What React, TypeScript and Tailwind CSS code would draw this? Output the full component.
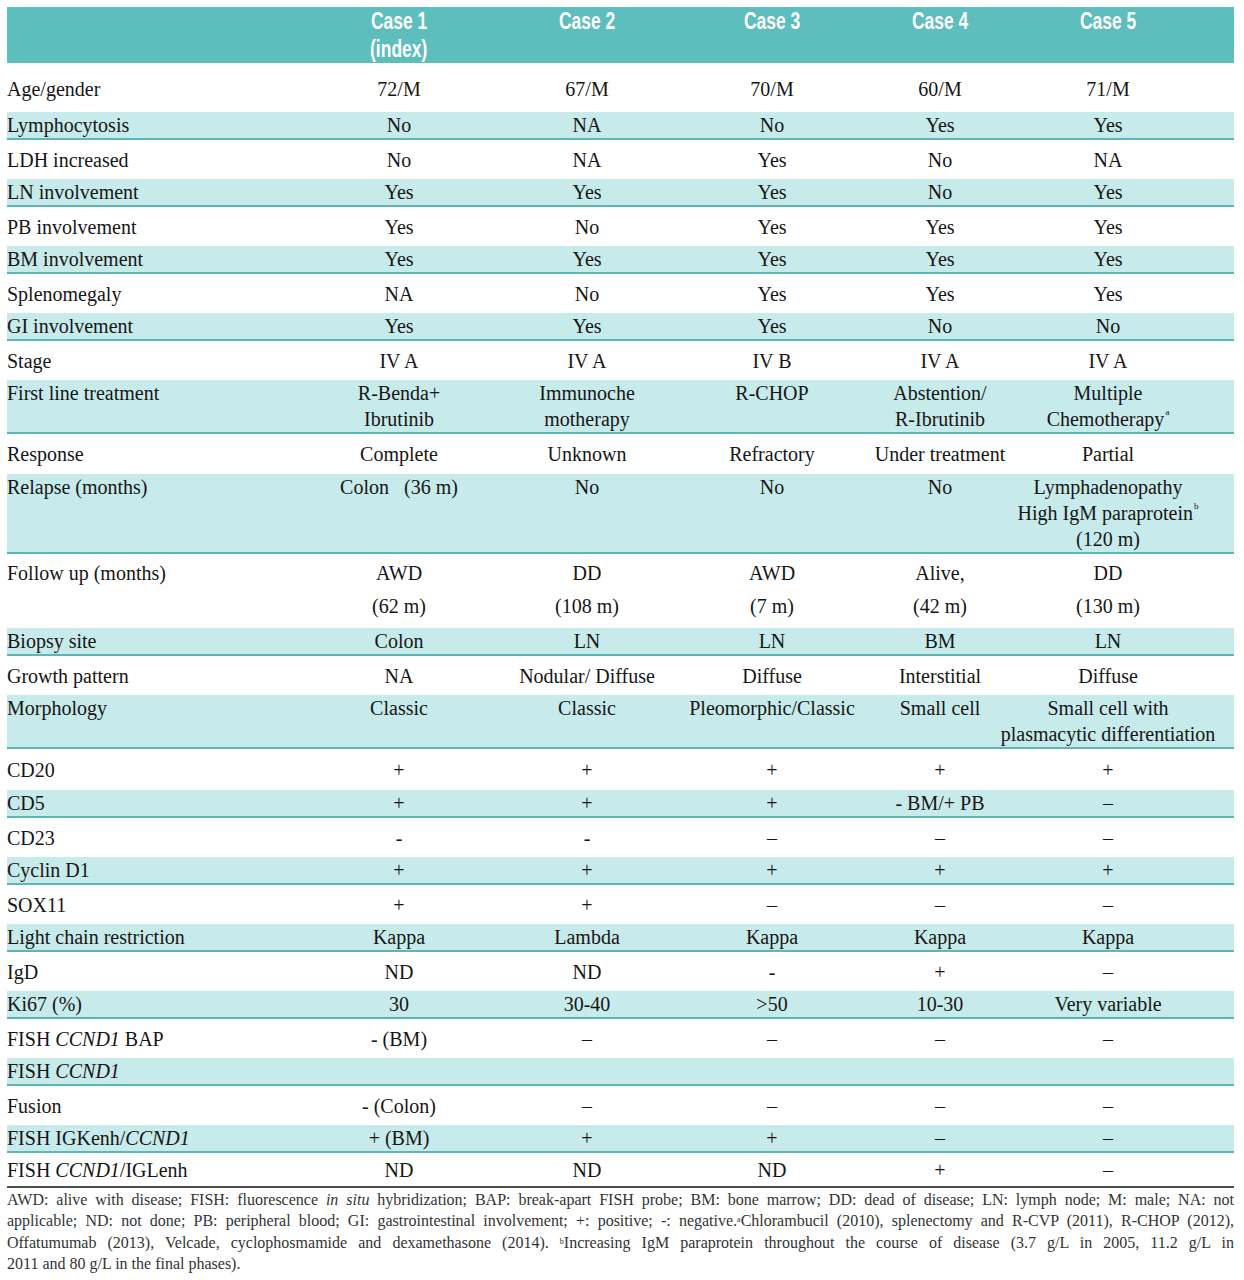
import React from "react";

type Kind = "light" | "white";
type Cell = React.ReactNode;
interface Row {
  label: React.ReactNode;
  cells: Cell[];
  kind: Kind;
  cls: string;
}

const Sup = ({ c }: { c: string }) => (
  <sup className="text-[9px] leading-none align-[7px] ml-[1px]">{c}</sup>
);
const I = ({ children }: { children: React.ReactNode }) => <i>{children}</i>;
const L = ({ lines }: { lines: React.ReactNode[] }) => (
  <>
    {lines.map((l, i) => (
      <div key={i}>{l}</div>
    ))}
  </>
);

const D = "–";

const rows: Row[] = [
  { label: "Age/gender", cells: ["72/M", "67/M", "70/M", "60/M", "71/M"], kind: "white", cls: "h-[49px] items-start pt-[13px]" },
  { label: "Lymphocytosis", cells: ["No", "NA", "No", "Yes", "Yes"], kind: "light", cls: "h-[28px]" },
  { label: "LDH increased", cells: ["No", "NA", "Yes", "No", "NA"], kind: "white", cls: "h-[39px]" },
  { label: "LN involvement", cells: ["Yes", "Yes", "Yes", "No", "Yes"], kind: "light", cls: "h-[28px]" },
  { label: "PB involvement", cells: ["Yes", "No", "Yes", "Yes", "Yes"], kind: "white", cls: "h-[39px]" },
  { label: "BM involvement", cells: ["Yes", "Yes", "Yes", "Yes", "Yes"], kind: "light", cls: "h-[28px]" },
  { label: "Splenomegaly", cells: ["NA", "No", "Yes", "Yes", "Yes"], kind: "white", cls: "h-[39px]" },
  { label: "GI involvement", cells: ["Yes", "Yes", "Yes", "No", "No"], kind: "light", cls: "h-[28px]" },
  { label: "Stage", cells: ["IV A", "IV A", "IV B", "IV A", "IV A"], kind: "white", cls: "h-[39px]" },
  {
    label: "First line treatment",
    cells: [
      <L lines={["R-Benda+", "Ibrutinib"]} />,
      <L lines={["Immunoche", "motherapy"]} />,
      "R-CHOP",
      <L lines={["Abstention/", "R-Ibrutinib"]} />,
      <L lines={["Multiple", <>Chemotherapy<Sup c="a" /></>]} />,
    ],
    kind: "light",
    cls: "h-[54px]",
  },
  { label: "Response", cells: ["Complete", "Unknown", "Refractory", "Under treatment", "Partial"], kind: "white", cls: "h-[40px]" },
  {
    label: "Relapse (months)",
    cells: [
      <span className="whitespace-pre">{"Colon   (36 m)"}</span>,
      "No",
      "No",
      "No",
      <L lines={["Lymphadenopathy", <>High IgM paraprotein<Sup c="b" /></>, "(120 m)"]} />,
    ],
    kind: "light",
    cls: "h-[80px]",
  },
  {
    label: "Follow up (months)",
    cells: [
      <L lines={["AWD", "(62 m)"]} />,
      <L lines={["DD", "(108 m)"]} />,
      <L lines={["AWD", "(7 m)"]} />,
      <L lines={["Alive,", "(42 m)"]} />,
      <L lines={["DD", "(130 m)"]} />,
    ],
    kind: "white",
    cls: "h-[74px] items-start pt-[3px] leading-[33px]",
  },
  { label: "Biopsy site", cells: ["Colon", "LN", "LN", "BM", "LN"], kind: "light", cls: "h-[28px]" },
  { label: "Growth pattern", cells: ["NA", "Nodular/ Diffuse", "Diffuse", "Interstitial", "Diffuse"], kind: "white", cls: "h-[39px]" },
  {
    label: "Morphology",
    cells: ["Classic", "Classic", "Pleomorphic/Classic", "Small cell", <L lines={["Small cell with", "plasmacytic differentiation"]} />],
    kind: "light",
    cls: "h-[54px]",
  },
  { label: "CD20", cells: ["+", "+", "+", "+", "+"], kind: "white", cls: "h-[41px]" },
  { label: "CD5", cells: ["+", "+", "+", "- BM/+ PB", D], kind: "light", cls: "h-[28px]" },
  { label: "CD23", cells: ["-", "-", D, D, D], kind: "white", cls: "h-[39px]" },
  { label: "Cyclin D1", cells: ["+", "+", "+", "+", "+"], kind: "light", cls: "h-[28px]" },
  { label: "SOX11", cells: ["+", "+", D, D, D], kind: "white", cls: "h-[39px]" },
  { label: "Light chain restriction", cells: ["Kappa", "Lambda", "Kappa", "Kappa", "Kappa"], kind: "light", cls: "h-[28px]" },
  { label: "IgD", cells: ["ND", "ND", "-", "+", D], kind: "white", cls: "h-[39px]" },
  { label: "Ki67 (%)", cells: ["30", "30-40", ">50", "10-30", "Very variable"], kind: "light", cls: "h-[28px]" },
  { label: <>FISH <I>CCND1</I> BAP</>, cells: ["- (BM)", D, D, D, D], kind: "white", cls: "h-[39px]" },
  { label: <>FISH <I>CCND1</I></>, cells: ["", "", "", "", ""], kind: "light", cls: "h-[28px]" },
  { label: "Fusion", cells: ["- (Colon)", D, D, D, D], kind: "white", cls: "h-[39px]" },
  { label: <>FISH IGKenh/<I>CCND1</I></>, cells: ["+ (BM)", "+", "+", D, D], kind: "light", cls: "h-[28px]" },
  { label: <>FISH <I>CCND1</I>/IGLenh</>, cells: ["ND", "ND", "ND", "+", D], kind: "white", cls: "h-[35px] border-b-2 border-[#4d4d4d]" },
];

const GRID = "grid grid-cols-[298px_188px_188px_182px_154px_182px_35px]";

const H = ({ children }: { children: React.ReactNode }) => (
  <span className="inline-block scale-x-[0.76] whitespace-nowrap">{children}</span>
);

export default function App() {
  return (
    <div className="w-[1244px] bg-white pl-[7px] pr-[10px] pt-[7px] pb-4 font-['Liberation_Serif',serif] text-[#161616]">
      {/* header */}
      <div className={`${GRID} h-[56px] bg-[#5ebdbd] text-white font-bold text-[23px] leading-[28px] font-['Liberation_Sans',sans-serif]`}>
        <div />
        <div className="flex flex-col items-center">
          <H>Case 1</H>
          <H>(index)</H>
        </div>
        <div className="flex flex-col items-center"><H>Case 2</H></div>
        <div className="flex flex-col items-center"><H>Case 3</H></div>
        <div className="flex flex-col items-center"><H>Case 4</H></div>
        <div className="flex flex-col items-center"><H>Case 5</H></div>
        <div />
      </div>

      {/* body */}
      <div className="text-[20px] leading-[26px]">
        {rows.map((r, i) => (
          <div
            key={i}
            className={`${GRID} ${
              r.kind === "light" ? "bg-[#c7eaea] border-b-2 border-[#5cb6b6] items-start" : "items-center"
            } ${r.cls}`}
          >
            <div className="whitespace-nowrap">{r.label}</div>
            {r.cells.map((c, j) => (
              <div key={j} className="flex flex-col items-center whitespace-nowrap">
                {c}
              </div>
            ))}
            <div />
          </div>
        ))}
      </div>

      {/* footnote */}
      <div className="mt-px text-[16px] leading-[21.3px] text-[#333]">
        <div className="text-justify [text-align-last:justify]">
          AWD: alive with disease; FISH: fluorescence <i>in situ</i> hybridization; BAP: break-apart FISH probe; BM: bone marrow; DD: dead of disease; LN: lymph node; M: male; NA: not
        </div>
        <div className="text-justify [text-align-last:justify]">
          applicable; ND: not done; PB: peripheral blood; GI: gastrointestinal involvement; +: positive; -: negative.
          <sup className="text-[8px]">a</sup>Chlorambucil (2010), splenectomy and R-CVP (2011), R-CHOP (2012),
        </div>
        <div className="text-justify [text-align-last:justify]">
          Offatumumab (2013), Velcade, cyclophosmamide and dexamethasone (2014). <sup className="text-[8px]">b</sup>Increasing IgM paraprotein throughout the course of disease (3.7 g/L in 2005, 11.2 g/L in
        </div>
        <div>2011 and 80 g/L in the final phases).</div>
      </div>
    </div>
  );
}
